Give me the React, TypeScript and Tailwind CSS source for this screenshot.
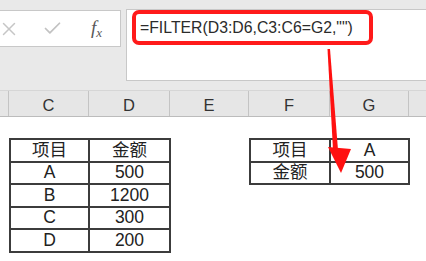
import React from "react";
import { X, Check } from "lucide-react";

const cellFont = { fontFamily: '"Liberation Sans", "Noto Sans CJK SC", sans-serif' };

function DataTable({ rows, widths }: { rows: string[][]; widths: [number, number] }) {
  return (
    <div className="flex flex-col border-t-2 border-l-2 border-[#3c3c3c]" style={cellFont}>
      {rows.map((r, i) => (
        <div key={i} className="flex">
          {r.map((c, j) => (
            <div
              key={j}
              className="h-[22.5px] flex items-center justify-center border-r-2 border-b-2 border-[#3c3c3c] text-[17.5px] leading-none text-[#222]"
              style={{ width: widths[j] }}
            >
              {c}
            </div>
          ))}
        </div>
      ))}
    </div>
  );
}

export default function App() {
  const cols = [
    { l: "", w: 9 },
    { l: "C", w: 80 },
    { l: "D", w: 81 },
    { l: "E", w: 79 },
    { l: "F", w: 81 },
    { l: "G", w: 79 },
    { l: "", w: 40 },
  ];
  return (
    <div className="relative w-[426px] h-[261px] overflow-hidden bg-white" style={cellFont}>
      {/* toolbar */}
      <div className="h-[90px] bg-[#e9e9e9] flex items-start pt-[9px]">
        <div className="mt-[1px] w-[121px] h-[37px] bg-white border-y border-r border-[#c8c8c8] flex items-center">
          <X className="ml-[-2px] shrink-0" size={22} color="#c6c6c6" strokeWidth={1.6} />
          <Check className="ml-[22px] shrink-0" size={21} color="#c2c2c2" strokeWidth={2} />
          <span
            className="ml-[28px] italic text-[19px] text-[#595959] leading-none"
            style={{ fontFamily: '"Liberation Serif", serif' }}
          >
            f<span className="text-[13px] align-[-3px]">x</span>
          </span>
        </div>
        <div className="ml-[5px] flex-1 h-[72px] bg-white border-y border-l border-[#c8c8c8] pl-[5px]">
          <div className="w-[241px] h-[35px] border-[4px] border-[#ff1a1a] rounded-[7px] flex items-center pl-[4px]">
            <span className="text-[15.8px] text-[#2b2b2b] whitespace-nowrap leading-none">
              =FILTER(D3:D6,C3:C6=G2,"")
            </span>
          </div>
        </div>
      </div>
      {/* column headers */}
      <div className="h-[27px] flex bg-[#e6e6e6] border-t border-[#d6d6d6] border-b border-b-[#bcbcbc]">
        {cols.map((c, i) => (
          <div
            key={i}
            className="h-full flex items-center justify-center border-r border-[#c4c4c4] text-[16.5px] text-[#333] shrink-0 pt-[3px]"
            style={{ width: c.w }}
          >
            {c.l}
          </div>
        ))}
      </div>
      {/* sheet */}
      <div className="flex items-start pt-[21px] pl-[9px]">
        <DataTable
          rows={[
            ["项目", "金额"],
            ["A", "500"],
            ["B", "1200"],
            ["C", "300"],
            ["D", "200"],
          ]}
          widths={[79, 81]}
        />
        <div className="ml-[78px]">
          <DataTable
            rows={[
              ["项目", "A"],
              ["金额", "500"],
            ]}
            widths={[80, 79]}
          />
        </div>
      </div>
      {/* annotation arrow */}
      <svg className="absolute left-0 top-0 pointer-events-none" width="426" height="261">
        <polygon points="327.5,49 330,49 338,150 333,150" fill="#ff1010" />
        <polygon points="328,147 351,149 341,173" fill="#ff1010" />
      </svg>
    </div>
  );
}
